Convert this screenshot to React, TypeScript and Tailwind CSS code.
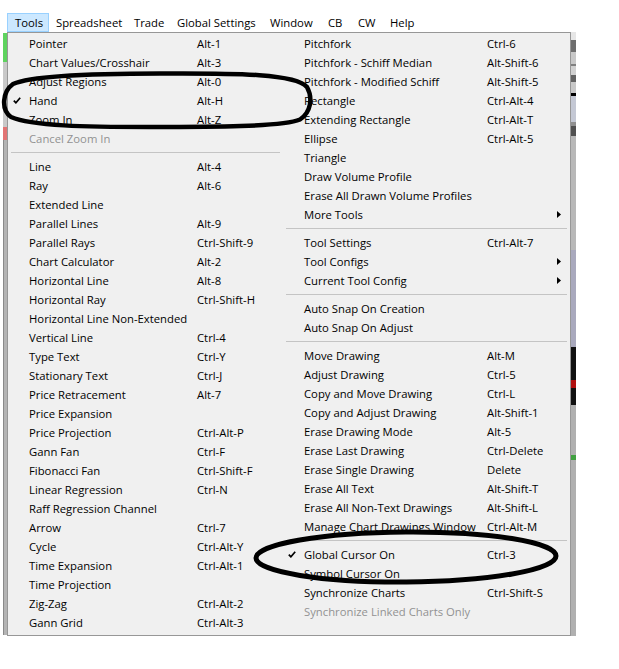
import React from "react";

type Entry =
  | { label: string; keys?: string; checked?: boolean; disabled?: boolean; sub?: boolean }
  | "sep";

const MENUBAR: { name: string; w: string; active?: boolean }[] = [
  { name: "Tools", w: "w-[42px]", active: true },
  { name: "Spreadsheet", w: "w-[78px]" },
  { name: "Trade", w: "w-[43px]" },
  { name: "Global Settings", w: "w-[93px]" },
  { name: "Window", w: "w-[58px]" },
  { name: "CB", w: "w-[30px]" },
  { name: "CW", w: "w-[32px]" },
  { name: "Help", w: "w-[40px]" },
];

const LEFT: Entry[] = [
  { label: "Pointer", keys: "Alt-1" },
  { label: "Chart Values/Crosshair", keys: "Alt-3" },
  { label: "Adjust Regions", keys: "Alt-0" },
  { label: "Hand", keys: "Alt-H", checked: true },
  { label: "Zoom In", keys: "Alt-Z" },
  { label: "Cancel Zoom In", disabled: true },
  "sep",
  { label: "Line", keys: "Alt-4" },
  { label: "Ray", keys: "Alt-6" },
  { label: "Extended Line" },
  { label: "Parallel Lines", keys: "Alt-9" },
  { label: "Parallel Rays", keys: "Ctrl-Shift-9" },
  { label: "Chart Calculator", keys: "Alt-2" },
  { label: "Horizontal Line", keys: "Alt-8" },
  { label: "Horizontal Ray", keys: "Ctrl-Shift-H" },
  { label: "Horizontal Line Non-Extended" },
  { label: "Vertical Line", keys: "Ctrl-4" },
  { label: "Type Text", keys: "Ctrl-Y" },
  { label: "Stationary Text", keys: "Ctrl-J" },
  { label: "Price Retracement", keys: "Alt-7" },
  { label: "Price Expansion" },
  { label: "Price Projection", keys: "Ctrl-Alt-P" },
  { label: "Gann Fan", keys: "Ctrl-F" },
  { label: "Fibonacci Fan", keys: "Ctrl-Shift-F" },
  { label: "Linear Regression", keys: "Ctrl-N" },
  { label: "Raff Regression Channel" },
  { label: "Arrow", keys: "Ctrl-7" },
  { label: "Cycle", keys: "Ctrl-Alt-Y" },
  { label: "Time Expansion", keys: "Ctrl-Alt-1" },
  { label: "Time Projection" },
  { label: "Zig-Zag", keys: "Ctrl-Alt-2" },
  { label: "Gann Grid", keys: "Ctrl-Alt-3" },
];

const RIGHT: Entry[] = [
  { label: "Pitchfork", keys: "Ctrl-6" },
  { label: "Pitchfork - Schiff Median", keys: "Alt-Shift-6" },
  { label: "Pitchfork - Modified Schiff", keys: "Alt-Shift-5" },
  { label: "Rectangle", keys: "Ctrl-Alt-4" },
  { label: "Extending Rectangle", keys: "Ctrl-Alt-T" },
  { label: "Ellipse", keys: "Ctrl-Alt-5" },
  { label: "Triangle" },
  { label: "Draw Volume Profile" },
  { label: "Erase All Drawn Volume Profiles" },
  { label: "More Tools", sub: true },
  "sep",
  { label: "Tool Settings", keys: "Ctrl-Alt-7" },
  { label: "Tool Configs", sub: true },
  { label: "Current Tool Config", sub: true },
  "sep",
  { label: "Auto Snap On Creation" },
  { label: "Auto Snap On Adjust" },
  "sep",
  { label: "Move Drawing", keys: "Alt-M" },
  { label: "Adjust Drawing", keys: "Ctrl-5" },
  { label: "Copy and Move Drawing", keys: "Ctrl-L" },
  { label: "Copy and Adjust Drawing", keys: "Alt-Shift-1" },
  { label: "Erase Drawing Mode", keys: "Alt-5" },
  { label: "Erase Last Drawing", keys: "Ctrl-Delete" },
  { label: "Erase Single Drawing", keys: "Delete" },
  { label: "Erase All Text", keys: "Alt-Shift-T" },
  { label: "Erase All Non-Text Drawings", keys: "Alt-Shift-L" },
  { label: "Manage Chart Drawings Window", keys: "Ctrl-Alt-M" },
  "sep",
  { label: "Global Cursor On", keys: "Ctrl-3", checked: true },
  { label: "Symbol Cursor On" },
  { label: "Synchronize Charts", keys: "Ctrl-Shift-S" },
  { label: "Synchronize Linked Charts Only", disabled: true },
];

// slivers of the chart window showing behind the popup
const RIGHT_STRIP: [string, string][] = [
  ["h-[8px]", "bg-[#e6e6e6]"],
  ["h-[12px]", "bg-[#6e6e6e]"],
  ["h-[12px]", "bg-[#c8c8c8]"],
  ["h-[2px]", "bg-[#808080]"],
  ["h-[9px]", "bg-[#d0d0d0]"],
  ["h-[7px]", "bg-[#626262]"],
  ["h-[11px]", "bg-[#c8c8c8]"],
  ["h-[3px]", "bg-[#000000]"],
  ["h-[26px]", "bg-[#c4c8d4]"],
  ["h-[4px]", "bg-[#909090]"],
  ["h-[10px]", "bg-[#505050]"],
  ["h-[114px]", "bg-[#b8b8b8]"],
  ["h-[97px]", "bg-[#a9a9bd]"],
  ["h-[33px]", "bg-[#111111]"],
  ["h-[8px]", "bg-[#b01010]"],
  ["h-[17px]", "bg-[#111111]"],
  ["h-[50px]", "bg-[#b0b0b0]"],
  ["h-[5px]", "bg-[#40a040]"],
  ["h-[176px]", "bg-[#b0b0b0]"],
];

function Check() {
  return (
    <svg width="8" height="7" viewBox="0 0 8 7" className="block">
      <path d="M0.8 3.6 L2.9 5.8 L7.2 0.8" fill="none" stroke="#000" strokeWidth="1.7" />
    </svg>
  );
}

function Arrow() {
  return (
    <svg width="4" height="7" viewBox="0 0 4 7" className="block">
      <polygon points="0,0 4,3.5 0,7" fill="#000" />
    </svg>
  );
}

function Column({ items, keyCol, width }: { items: Entry[]; keyCol: string; width: string }) {
  return (
    <div className={`flex flex-col ${width}`}>
      {items.map((it, i) => {
        if (it === "sep") {
          return (
            <div key={i} className="h-[9px] flex items-center px-[3px]">
              <div className="h-px w-full bg-[#c4c4c4]" />
            </div>
          );
        }
        return (
          <div
            key={i}
            className={`h-[19px] flex items-center whitespace-nowrap ${it.disabled ? "text-[#929292]" : "text-black"}`}
          >
            <div className="w-[21px] flex-none flex justify-center pr-[3px]">
              {it.checked && <Check />}
            </div>
            <span className={`${keyCol} flex-none`}>{it.label}</span>
            {it.keys && <span>{it.keys}</span>}
            {it.sub && (
              <div className="ml-auto mr-[9px]">
                <Arrow />
              </div>
            )}
          </div>
        );
      })}
    </div>
  );
}

export default function App() {
  return (
    <div className="relative w-[619px] h-[669px] overflow-hidden bg-white pt-[13px] font-['Open_Sans','Noto_Sans',sans-serif] text-[11.3px] leading-none">
      {/* menu bar */}
      <div className="flex h-[19px] pl-[7px]">
        {MENUBAR.map((m) => (
          <div
            key={m.name}
            className={`${m.w} flex-none flex items-center px-[7px] whitespace-nowrap ${
              m.active ? "bg-[#cce8ff] border border-[#99d1ff] px-[6px]" : ""
            }`}
          >
            {m.name}
          </div>
        ))}
      </div>

      <div className="flex">
        {/* edge of the window behind */}
        <div className="w-[7px] flex-none pl-[3px] pt-[1px]">
          <div className="flex flex-col w-[4px]">
            <div className="h-[29px] bg-[#5fd35f]" />
            <div className="h-[65px] bg-[#c9c9c9]" />
            <div className="h-[13px] bg-[#e27474]" />
            <div className="h-[495px] bg-[#b4b4b4] border-l border-[#8a8a8a]" />
          </div>
        </div>

        {/* dropdown */}
        <div className="w-[564px] flex-none border border-[#979797] bg-[#f0f0f0] pt-[1px] pb-[2px] flex items-start">
          <Column items={LEFT} keyCol="w-[168px]" width="w-[275px]" />
          <Column items={RIGHT} keyCol="w-[183px]" width="flex-1" />
        </div>

        <div className="w-[5px] flex-none flex flex-col">
          {RIGHT_STRIP.map(([h, c], i) => (
            <div key={i} className={`${h} ${c}`} />
          ))}
        </div>
      </div>

      {/* pen marks drawn over the menu */}
      <svg className="absolute inset-0 pointer-events-none" width="619" height="669" viewBox="0 0 619 669">
        <path
          d="M160 73.5 C240 73 296 74 307 87 C313 98 311 112 300 119.5 C282 127 210 127 150 127 C85 127 32 126 11 117 C1 110 2 92 13 84 C32 75.5 90 73.5 160 73.5 Z"
          fill="none"
          stroke="#000"
          strokeWidth="4.5"
          strokeLinejoin="round"
        />
        <ellipse cx="406" cy="557" rx="150" ry="25" fill="none" stroke="#000" strokeWidth="5" transform="rotate(-0.4 406 557)" />
      </svg>
    </div>
  );
}
